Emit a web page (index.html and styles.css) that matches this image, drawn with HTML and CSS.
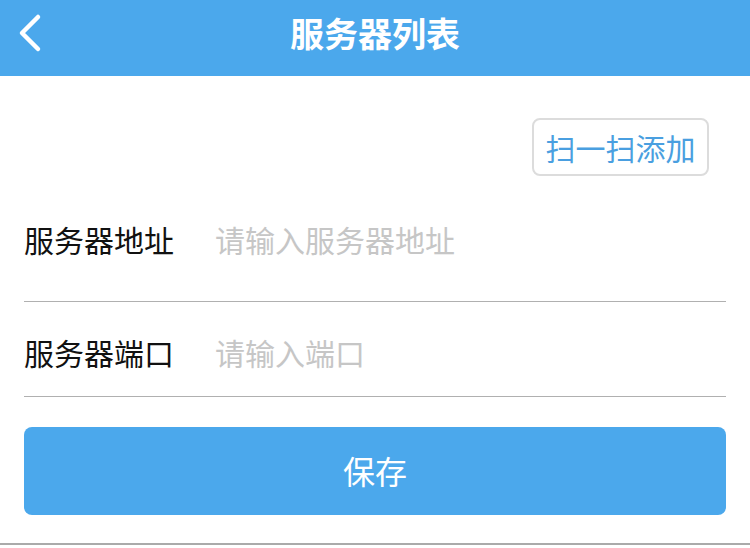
FILE: index.html
```html
<!DOCTYPE html>
<html lang="zh">
<head>
<meta charset="utf-8">
<link rel="stylesheet" href="styles.css">
</head>
<body>
<div class="page">
  <header class="nav">
    <span class="back">
      <svg width="28" height="40" viewBox="0 0 28 40"><path d="M22 4 L6 20 L22 36" fill="none" stroke="#fff" stroke-width="4.5" stroke-linecap="round" stroke-linejoin="round"/></svg>
    </span>
    <h1 class="title">服务器列表</h1>
  </header>
  <main class="content">
    <div class="actions">
      <button class="scan">扫一扫添加</button>
    </div>
    <div class="field field-first">
      <label class="label">服务器地址</label>
      <span class="placeholder">请输入服务器地址</span>
    </div>
    <div class="field field-second">
      <label class="label">服务器端口</label>
      <span class="placeholder">请输入端口</span>
    </div>
    <button class="save">保存</button>
  </main>
  <div class="bottom-line"></div>
</div>
</body>
</html>
```
FILE: styles.css
```css
html, body {
  margin: 0;
  padding: 0;
  background: #fff;
  font-family: "Noto Sans CJK SC", "Noto Sans", sans-serif;
}
.page {
  width: 750px;
  height: 548px;
  overflow: hidden;
  position: relative;
}
.nav {
  height: 76px;
  background: #4ba8ec;
  display: flex;
  align-items: center;
  justify-content: center;
  position: relative;
}
.back {
  position: absolute;
  left: 16px;
  top: 13px;
  display: flex;
}
.title {
  margin: 0;
  color: #fff;
  font-size: 34px;
  font-weight: 700;
  line-height: 1;
  margin-top: -11px;
}
.content {
  padding: 0 24px;
  display: flex;
  flex-direction: column;
}
.actions {
  display: flex;
  justify-content: flex-end;
  padding-top: 42px;
  padding-right: 17px;
}
.scan {
  width: 177px;
  height: 58px;
  border: 2px solid #dcdcdc;
  border-radius: 8px;
  background: #fff;
  color: #4a9fe0;
  font-family: inherit;
  font-size: 30px;
  padding: 0;
  line-height: 1;
}
.field {
  display: flex;
  align-items: center;
  border-bottom: 1px solid #b0b0b0;
  box-sizing: border-box;
}
.field-first {
  height: 126px;
  align-items: flex-start;
  padding-top: 48px;
}
.field-second {
  height: 95px;
  padding-top: 5px;
}
.label {
  width: 191px;
  font-size: 30px;
  color: #111;
  line-height: 1;
}
.placeholder {
  font-size: 30px;
  color: #c6c6c6;
  line-height: 1;
}
.save {
  margin-top: 30px;
  height: 88px;
  border: 0;
  border-radius: 8px;
  background: #4ba8ec;
  color: #fff;
  font-family: inherit;
  font-size: 32px;
  line-height: 1;
  padding-bottom: 4px;
}
.bottom-line {
  position: absolute;
  left: 0;
  right: 0;
  top: 543px;
  height: 2px;
  background: #aaa;
}
```
